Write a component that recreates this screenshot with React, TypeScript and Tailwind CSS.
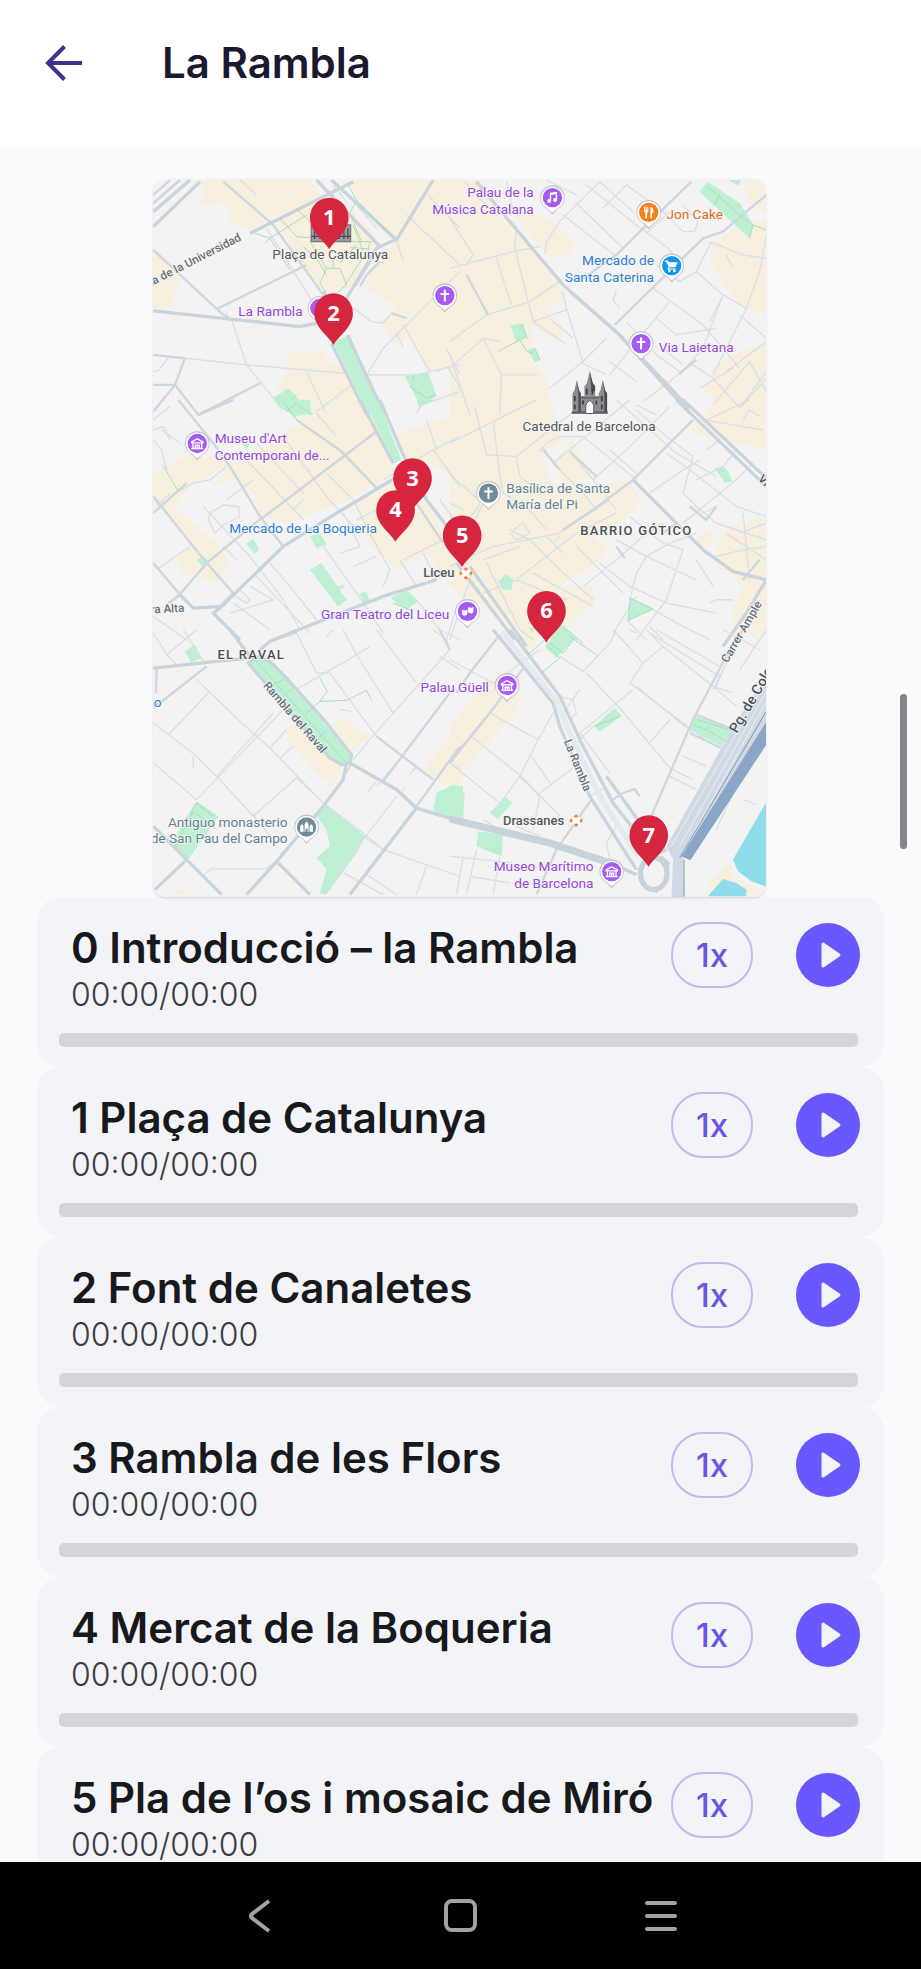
import type { ReactNode } from "react";

type Sheet = {
  x: number;
  y: number;
  built: string;
  parks: string;
  trails: string;
  minor: string;
  medium: string;
  major: string;
};

/* The map is drawn as six adjoining sheets, three units to the pixel. */
const sheets: Sheet[] = [
  {
    x: -9,
    y: -12,
    built:
      "M150 15L480 15L520 70L350 135L310 168L240 140L235 100L205 75L190 95L140 90L165 60ZM380 135L480 85L570 70L700 200L600 340L520 350L440 250ZM590 15L990 15L990 480L930 560L840 590L780 480L745 515L700 460L690 430L740 420L730 390L660 350L650 320L690 230L740 195L600 40ZM10 215L90 285L85 340L60 400L10 400ZM380 640L415 590L415 530L520 530L530 560L600 570L620 690L560 720L440 720Z",
    parks:
      "M550 500L600 480L700 720L655 720ZM370 670L415 640L490 720L440 720L390 700ZM765 605L835 592L860 665L812 692Z",
    trails:
      "M315 175L360 190L470 120M345 205L360 190M390 130L440 185L500 190M440 100L520 180M595 30L620 75L735 190M620 75L600 115L635 200M480 200L530 280L570 280L590 330L560 355M530 280L510 325L530 355M660 200L655 225L585 330M590 200L665 200M600 218L660 222M460 215L500 250L530 300M610 150L640 230M550 255L550 280M620 210L570 265M360 190L420 285M780 635L830 670L860 660M410 690L440 660M420 715L440 680L470 700M790 600L792 615",
    minor:
      "M105 550L290 570L640 600L800 600L930 570M245 435L290 570L375 675L440 720M570 385L610 400L665 440L700 445L725 415L770 430M650 600L700 520L770 450L930 290M760 450L840 590M740 195L760 260M770 120L930 270M835 60L930 160M350 160L500 400M470 590L525 710M500 710L600 635M890 520L930 600M740 475L760 515M30 580L55 550M10 590L30 585M230 410L235 430L350 440M270 15L320 60M550 30L590 80M620 90L680 160M860 590L895 575L930 640M800 715L815 690L930 650",
    medium:
      "M220 20L370 150L470 290L520 360M10 225L215 415L245 435M205 400L470 270M105 550L75 630L10 710M10 540L105 550M10 630L75 630L145 720L330 625M680 230L615 335M690 260L650 300L630 335M770 430L725 415M10 60L60 15M10 85L90 15",
    major:
      "M10 110L120 15M10 155L150 20M300 175L610 20M10 408L450 455L500 445M500 15L690 215M545 15L740 195M740 195L850 15M740 192L680 220L590 370M520 350L545 395M545 505L650 720M592 480L705 720",
  },
  {
    x: 891,
    y: -12,
    built:
      "M0 15L80 15L180 140L280 250L335 320L345 370L300 400L300 430L345 470L330 500L250 460L240 560L290 600L300 650L280 720L0 720ZM190 120L280 120L340 170L375 200L360 240L300 250ZM850 160L950 130L950 420L880 400L810 310L780 250L790 210ZM880 15L940 15L950 120L900 90ZM780 590L850 540L950 500L950 720L860 720L820 690L750 640L790 620Z",
    parks:
      "M750 50L775 20L870 85L912 150L900 190L830 125ZM835 15L875 15L865 32ZM180 452L220 445L232 490L200 500ZM235 525L255 518L272 555L255 563Z",
    trails:
      "M790 95L810 60M770 30L880 130L910 150L950 165M145 530L210 495L232 530L250 535M215 450L232 490M900 190L910 150M255 520L270 555",
    minor:
      "M0 130L70 240L50 270M0 280L190 230L270 215M45 20L110 90M200 150L195 220L250 440M285 240L290 200L330 140L450 20M0 500L110 420L240 380L330 320M140 250L185 390M340 350L350 400L400 565L470 600M250 440L345 505M250 440L350 405M375 80L520 220M340 120L500 245M410 30L560 150L650 215L700 270M460 100L530 30L640 110L700 170L735 170L745 140L700 90M785 200L740 290L820 360L780 440M780 200L880 240L950 250M950 180L930 290L890 400L790 600M610 340L760 450L870 580M620 430L680 480L800 460M660 380L560 500L480 600M530 440L620 540L690 590M690 600L760 520L820 360M870 420L950 490M820 360L890 400M0 580L100 490L150 500M100 490L155 600L150 720M0 540L60 720M155 600L260 600M470 490L400 560L300 640M580 680L660 620L730 560M830 590L950 500M870 700L950 590M500 345L490 375L510 400M450 20L550 110M590 175L660 110M620 270L690 320L740 290M830 240L850 280M730 570L790 610L870 700L950 610M640 520L700 570M750 640L850 580M790 690L900 560L950 650M290 15L380 60M170 20L190 110M560 690L620 720M300 430L370 490M480 560L560 620",
    medium:
      "M50 300L115 420M495 450L760 190L820 170L890 110L950 60M725 20L580 160L500 240L400 310M690 595L740 555",
    major: "M80 20L180 140L340 330L500 470L720 715M360 350L510 480L720 700",
  },
  {
    x: -9,
    y: 663,
    built:
      "M440 45L600 0L640 0L740 180L710 240L600 300L480 340L410 370L330 350L320 290L260 240L200 250L235 200L400 100L450 70ZM10 220L100 170L240 170L230 200L130 250L70 320L130 370L200 430L240 490L200 550L90 520L80 470L130 430L90 380L10 310ZM740 100L990 20L990 300L860 200L760 170ZM620 300L720 240L830 310L880 400L960 450L990 600L930 590L860 500L830 460L740 510L680 460L640 400Z",
    parks:
      "M640 0L685 0L755 180L735 190ZM370 0L480 0L485 40L430 50ZM288 430L310 418L328 450L312 462ZM140 480L160 470L178 485L160 505ZM480 510L515 490L590 600L565 620ZM628 580L650 575L660 605L640 608ZM722 595L770 570L805 605L770 630ZM480 410L510 400L530 435L500 445ZM800 0L860 0L808 22ZM275 130L300 130L290 150ZM560 560L585 555L575 570Z",
    trails:
      "M38 195L85 275M400 5L440 60M410 35L440 10L485 45M730 610L780 630",
    minor:
      "M85 275L130 250L180 240L230 200M10 120L35 150L50 210M35 90L90 130M10 90L40 80L60 120M320 130L460 280M280 170L460 360M400 110L530 290L620 390M500 40L560 110M530 220L610 300L660 400L720 510M180 340L220 315L265 320L270 350L220 375L195 400L175 360ZM20 510L120 440M175 490L60 610M160 320L300 470L400 600L450 690M360 490L420 560L500 660M240 580L290 610L300 600L270 570M310 520L480 700M520 440L620 580L700 700M610 500L680 470M580 340L630 440L570 460M700 240L850 150L930 110M850 150L930 260M830 60L860 150M720 510L700 560M760 480L820 450L880 420M750 480L800 560M820 460L860 540M800 600L870 690L930 720M890 720L920 620M240 640L370 600L300 560M250 610L360 690M10 650L110 720M460 300L430 330M230 300L310 240M220 440L260 480M60 280L20 320M10 60L60 20M870 300L930 380M620 360L720 310",
    medium:
      "M85 0L190 130L240 200L330 350L400 440M330 360L680 95M340 350L170 490L85 590L55 610M10 490L90 585M10 290L170 490L250 580L210 620M10 340L110 250M440 60L575 155L680 265M145 45L250 0M800 310L880 430",
    major:
      "M215 620L400 440L560 340L735 235M90 585L130 625L215 620L190 640L270 720M370 720L700 590L860 540M630 0L730 190M690 0L760 165L830 300L930 430",
  },
  {
    x: 891,
    y: 663,
    built:
      "M0 0L300 0L340 130L270 160L310 250L430 260L540 240L570 300L530 360L430 410L475 450L440 490L330 560L430 560L435 600L340 700L230 720L100 620L0 560ZM750 60L800 0L950 0L950 150L860 130L730 100L720 70ZM310 190L370 120L400 180L430 230L340 260ZM800 440L840 380L950 350L950 700L850 720L850 620L880 560L830 520L800 500ZM735 415L780 390L795 430L750 450Z",
    parks:
      "M145 545L170 522L190 540L185 572L160 570ZM542 595L610 628L535 662ZM795 205L820 200L835 215L848 245L825 248ZM330 670L385 720L300 720ZM235 685L255 680L250 700Z",
    trails: "M542 595L610 628L535 662ZM340 680L400 730",
    minor:
      "M0 225L100 310L40 430M0 130L140 60L260 0M75 20L110 165L200 170L300 90L380 30M130 60L150 230L160 280M200 170L210 230L260 270M270 155L290 130L330 110L400 110M360 155L430 240L500 330M280 140L310 190L400 280L440 330M310 190L420 100L540 0M400 110L560 240M430 240L530 150L660 20M480 150L560 220M500 0L680 160L800 230M560 30L650 110L730 170M600 280L700 210L750 180M650 160L720 210L860 320L950 350M740 240L820 200L860 150M730 170L700 280L760 340L800 320M740 320L800 370L950 420M700 370L860 240L910 190M0 500L130 440L330 400L480 300M110 490L210 690L250 720M180 390L240 420L320 500L430 600M190 390L220 370L240 400L200 420L180 400M290 410L340 460M310 430L330 410M100 580L200 540L380 400L500 340M200 540L350 600M250 520L430 620M450 490L540 560L650 610L800 640M500 420L590 470L740 540M590 470L560 520L540 600M540 350L640 430L700 450L650 600M590 470L660 430L740 400M650 600L560 720M610 630L700 680L780 720M780 610L800 600L850 600M800 470L880 450L950 440M830 400L950 480M880 340L900 540M870 400L950 370M740 480L790 560M640 370L590 400L500 480L400 560M0 420L80 330L120 250M160 280L230 320L290 390M760 60L820 70L940 90M880 60L900 30L930 50M770 60L900 0M810 120L770 150M0 350L60 430M100 480L210 440M560 590L490 700M380 440L520 580M0 720L60 540M40 330L0 310M530 660L590 720M600 680L640 720",
    medium:
      "M500 440L525 475M730 60L550 240L430 330L340 390M550 240L680 370M280 150L330 210M680 370L640 400M360 155L440 230M720 320L770 360L800 320M880 540L930 480",
    major:
      "M680 0L950 260M700 0L950 235M550 240L680 370L760 450L850 515L950 540M950 540L890 640L820 740M20 490L195 720M60 500L230 740",
  },
  {
    x: -9,
    y: 1353,
    built:
      "M410 290L450 285L580 410L550 465L500 430L415 330ZM550 280L590 268L660 325L600 370ZM820 420L930 280L930 480L870 460ZM60 795L80 782L120 785L130 795Z",
    parks:
      "M290 95L330 80L360 95L410 150L530 290L605 370L600 400L570 405L540 380L310 120ZM105 65L135 45L155 85L125 100ZM140 515L205 560L115 690L65 640L100 580ZM500 560L530 525L645 620L620 670L530 795L510 790L530 720L500 685L540 650L530 600ZM850 540L860 490L910 465L940 470L940 575L860 550Z",
    trails:
      "M310 85L590 400M370 165L400 150M410 190L430 175M465 255L510 215L590 212L650 182L665 212M510 145L532 185L510 215M505 330L530 300M120 550L140 520L190 560M75 650L130 545L200 600M590 430L605 400",
    minor:
      "M10 10L50 75L140 0M50 75L80 105M100 0L160 95M140 150L265 270L360 355L520 520L640 610L700 660L930 740M10 280L140 380L200 440L310 560L380 640M10 400L140 510M55 315L175 190M140 510L265 380L400 240M200 440L370 250M130 380L130 415M360 355L410 300M390 385L430 350M310 560L440 445L490 490M440 10L500 130L540 130L680 320M430 185L620 75L580 0M620 75L730 250L660 330L610 390M620 75L660 50M680 0L800 160M850 0L890 30L900 60L730 250M870 80L930 120M570 240L605 245M655 485L680 455M780 435L800 410M755 490L765 470M310 550L320 570M740 500L540 760M700 660L640 740L600 795M580 730L700 795M650 735L740 795M830 710L800 795M640 620L700 660M550 0L530 20M680 470L740 400M900 400L930 420M180 720L160 740M180 718L345 718L370 700",
    medium:
      "M10 235L170 110M20 115L18 190M700 455L900 190M680 320L850 450M800 530L930 350M900 60L870 0",
    major:
      "M240 0L300 80M10 115L200 95L300 85M330 60L360 35L440 5M295 100L320 130L540 385L575 405L600 400L605 375L530 280L410 145L360 95L325 80ZM590 400L580 450L520 530L380 695L290 795M600 400L740 480L800 535L930 575M800 535L600 795M10 590L110 690L215 795M110 690L15 780M380 695L480 795",
  },
  {
    x: 891,
    y: 1353,
    built:
      "M0 290L120 150L210 190L200 250L70 390L20 470L0 460ZM180 0L255 0L260 40L235 65ZM775 760L830 710L845 700L850 740L890 765L930 780L925 795L880 790L830 760L790 795Z",
    parks:
      "M0 465L45 490L40 565L0 560ZM120 550L165 500L188 520L145 568ZM80 650L85 605L160 615L155 680ZM433 290L495 235L515 258L450 307ZM720 300L735 258L850 300L815 350ZM285 50L330 0L375 25L320 85Z",
    trails:
      "M235 75L285 30M360 20L440 75M290 45L330 85L275 130M300 40L340 70L375 25M433 290L515 258M730 285L770 300L830 335M745 270L850 305M765 305L780 290",
    minor:
      "M0 90L130 160L270 60M120 250L265 330L310 250M65 320L220 445L330 560M0 400L150 520M265 330L210 440L130 550M245 380L300 460M270 490L370 415M270 500L250 600M210 440L270 500M330 80L400 125L480 40L500 0M410 130L510 235L660 415L730 450M390 180L340 250M550 180L390 310L480 430M490 0L580 100L540 160L780 340M580 100L640 50L590 0M600 10L810 140M640 50L790 170L850 190M620 0L810 110M820 0L930 60M660 270L600 340M700 380L770 410M660 440L740 480M800 170L850 50M730 310L560 170M860 230L780 160M330 200L370 210L380 250L360 270M450 480L500 590L470 640L480 690M420 500L470 470M80 660L60 750L50 795M150 680L130 795M0 680L190 700M60 740L180 760M200 590L270 620M40 680L20 795M880 510L920 525M850 490L800 600M100 570L150 600M540 590L580 560M370 350L430 290M790 180L880 0M950 0L870 120M540 0L560 10",
    medium:
      "M225 110L120 250L0 400M150 15L60 130L20 190M600 570L730 270L840 60L880 0M425 510L320 660L260 795M490 510L520 490L555 478L570 500M740 255L850 300M720 310L815 355M0 395L120 250",
    major:
      "M130 0L310 220L330 290L420 500L560 720M180 0L330 200L400 350L490 520L545 590M470 440L600 620M590 690L570 720L590 770L620 785L650 750L655 700L630 680M0 568L300 640L480 700L560 735M650 660L600 680",
  },
];

const purple = "fill-[#9548dc]";
const slate = "fill-[#66818f]";
const blue = "fill-[#2f7fcf]";
const ink = "fill-[#54585b]";

type Label = { x: number; y: number; tone: string; end?: boolean; mid?: boolean; turn?: number; heavy?: boolean; lines: string[] };

const labels: Label[] = [
  { x: 541, y: 240, tone: ink, mid: true, lines: ["Plaça de Catalunya"] },
  { x: 458, y: 411, tone: purple, end: true, lines: ["La Rambla"] },
  { x: 1152, y: 54, tone: purple, end: true, lines: ["Palau de la", "Música Catalana"] },
  { x: 1550, y: 121, tone: "fill-[#dd6c26]", lines: ["Jon Cake"] },
  { x: 1513, y: 258, tone: blue, end: true, lines: ["Mercado de", "Santa Caterina"] },
  { x: 1527, y: 518, tone: purple, lines: ["Via Laietana"] },
  { x: 194, y: 793, tone: purple, lines: ["Museu d'Art", "Contemporani de..."] },
  { x: 681, y: 1062, tone: blue, end: true, lines: ["Mercado de La Boqueria"] },
  { x: 1318, y: 755, tone: ink, mid: true, lines: ["Catedral de Barcelona"] },
  { x: 1069, y: 942, tone: slate, lines: ["Basílica de Santa", "María del Pi"] },
  { x: 898, y: 1322, tone: purple, end: true, lines: ["Gran Teatro del Liceu"] },
  { x: 1017, y: 1540, tone: purple, end: true, lines: ["Palau Güell"] },
  { x: 413, y: 1944, tone: slate, end: true, lines: ["Antiguo monasterio", "de San Pau del Campo"] },
  { x: 1331, y: 2077, tone: purple, end: true, lines: ["Museo Marítimo", "de Barcelona"] },
  { x: 914, y: 1197, tone: ink, end: true, heavy: true, lines: ["Liceu"] },
  { x: 1243, y: 1943, tone: ink, end: true, heavy: true, lines: ["Drassanes"] },
  { x: 35, y: 1584, tone: blue, end: true, lines: ["Sant Antonio"] },
];

const streets: Label[] = [
  { x: 272, y: 187, tone: "fill-[#66717b]", end: true, turn: -27, lines: ["Ronda de la Universidad"] },
  { x: 103, y: 1302, tone: "fill-[#66717b]", end: true, turn: -3, lines: ["Riera Alta"] },
  { x: 345, y: 1528, tone: "fill-[#66717b]", turn: 49, lines: ["Rambla del Raval"] },
  { x: 1250, y: 1696, tone: "fill-[#66717b]", turn: 68, lines: ["La Rambla"] },
  { x: 1726, y: 1462, tone: "fill-[#66717b]", turn: -60, lines: ["Carrer Ample"] },
  { x: 1830, y: 908, tone: "fill-[#4b535b]", turn: 45, lines: ["Via Laietana"] },
];

function CrossGlyph() {
  return <path d="M-3-18h6v10h10v6H3v20h-6V-2h-10v-6h10z" className="fill-white" />;
}

function MuseumGlyph() {
  return (
    <g className="fill-none stroke-white stroke-[4]">
      <path d="M-17-5L0-14 17-5V-2H-17ZM-13-2V14M13-2V14M-18 15H18M-6 14V5H6V14M0 5V14" />
    </g>
  );
}

function MusicGlyph() {
  return (
    <g className="fill-white">
      <path d="M-8-15L14-18V-11L-4-8V9H-8ZM10-14H14V6H10Z" />
      <circle cx="-10" cy="10" r="6" />
      <circle cx="8" cy="7" r="6" />
    </g>
  );
}

function ForkGlyph() {
  return (
    <path
      d="M-14-17h3v9h2v-9h3v9h2v-9h3v12q0 5-4 6V18h-5V1q-4-1-4-6zM5-17q9 1 9 12V2h-4v16H5z"
      className="fill-white"
    />
  );
}

function CartGlyph() {
  return (
    <g className="fill-white">
      <path d="M-19-15h8l3 5h26L11 5h-17l-2 4h20v3h-25l4-9-7-14h-5z" />
      <circle cx="-7" cy="16" r="4" />
      <circle cx="8" cy="16" r="4" />
    </g>
  );
}

function MaskGlyph() {
  return (
    <g className="fill-white">
      <path d="M-17-5q8 5 17 0v12q-2 6-8 6-7 0-9-6z" />
      <path d="M2-13q8 4 16 0V0q-2 6-8 6-6 0-8-4z" />
    </g>
  );
}

function AbbeyGlyph() {
  return (
    <path d="M-19 14V-3l5-5 5 5V14ZM-6 14V-9L0-17 6-9V14H3V6Q0 2-3 6V14ZM9 14V-3l5-5 5 5V14Z" className="fill-white" />
  );
}

const violet = "fill-[#a75bf2]";
const places: { x: number; y: number; tone: string; glyph: ReactNode }[] = [
  { x: 885, y: 362, tone: violet, glyph: <CrossGlyph /> },
  { x: 510, y: 400, tone: violet, glyph: null },
  { x: 1208, y: 68, tone: violet, glyph: <MusicGlyph /> },
  { x: 1497, y: 112, tone: "fill-[#f7811e]", glyph: <ForkGlyph /> },
  { x: 1566, y: 272, tone: "fill-[#1296f0]", glyph: <CartGlyph /> },
  { x: 1474, y: 506, tone: violet, glyph: <CrossGlyph /> },
  { x: 142, y: 806, tone: violet, glyph: <MuseumGlyph /> },
  { x: 1016, y: 955, tone: "fill-[#708b99]", glyph: <CrossGlyph /> },
  { x: 953, y: 1310, tone: violet, glyph: <MaskGlyph /> },
  { x: 1072, y: 1532, tone: violet, glyph: <MuseumGlyph /> },
  { x: 470, y: 1957, tone: "fill-[#708b99]", glyph: <AbbeyGlyph /> },
  { x: 1386, y: 2091, tone: violet, glyph: <MuseumGlyph /> },
];

const stops = [
  { n: 1, x: 538, y: 128 },
  { n: 2, x: 551, y: 415 },
  { n: 3, x: 788, y: 910 },
  { n: 4, x: 737, y: 1006 },
  { n: 5, x: 937, y: 1082 },
  { n: 6, x: 1190, y: 1309 },
  { n: 7, x: 1497, y: 1982 },
];

function MapLabel({ label, street }: { label: Label; street?: boolean }) {
  const anchor = label.end ? "[text-anchor:end]" : label.mid ? "[text-anchor:middle]" : "";
  return (
    <text
      transform={`translate(${label.x} ${label.y})${label.turn ? ` rotate(${label.turn})` : ""}`}
      className={`stroke-[#f7f7f7] stroke-[5] [paint-order:stroke] ${label.tone} ${anchor} ${
        street ? "text-[35px] font-medium" : label.heavy ? "text-[39px] font-medium" : "text-[41px]"
      }`}
      dominantBaseline="middle"
    >
      {label.lines.map((line, i) => (
        <tspan key={line} x={0} dy={i ? 50 : 0}>
          {line}
        </tspan>
      ))}
    </text>
  );
}

function Station({ x, y }: { x: number; y: number }) {
  return (
    <g transform={`translate(${x} ${y})`}>
      <path d="M0-20L20 0 0 20-20 0Z" className="fill-white" />
      <path
        d="M-7-13L0-19 7-13 0-7ZM-7 13L0 7 7 13 0 19ZM-17-7L-10-1-14 7-20 1ZM17-7L10-1 14 7 20 1Z"
        className="fill-[#ee8133]"
      />
    </g>
  );
}

function Cathedral() {
  return (
    <g transform="translate(1320 655)">
      <path
        d="M-52 60V0L-46-8-39-40-32-8-27 0V8H-16V-22L-9-30 0-66 9-30 16-22V8H27V0L32-8 39-40 46-8 52 0V60Z"
        className="fill-[#8b8d91]"
      />
      <path
        d="M-34 60V0L-39-40-32-8-27 0V60ZM0-66L9-30 16-22V-6H4V-20ZM39-40L46-8 52 0V60H44V0Z"
        className="fill-[#4a4c50]"
      />
      <path
        d="M-45 8V24M-45 34V48M36 8V24M36 34V48M-9-14V4M8-14V4M-20 22V34M20 22V34"
        className="stroke-[#3a3c40] stroke-[5]"
      />
      <path d="M-54 55H54V62H-54ZM-28 12H28V16H-28Z" className="fill-[#5c5e62]" />
      <path d="M-12 61V38Q-11 27 0 22 11 27 12 38V61Z" className="fill-white stroke-[#55575b] stroke-[3]" />
    </g>
  );
}

function RouteMap() {
  return (
    <svg
      viewBox="0 0 1839 2154"
      role="img"
      aria-label="La Rambla"
      className="block w-2/3 overflow-hidden rounded-[12px] bg-[#f3f3f4] font-[Roboto,sans-serif] shadow-sm"
    >
      {sheets.map((s) => (
        <g key={`${s.x},${s.y}`} transform={`translate(${s.x} ${s.y})`}>
          <path d={s.built} className="fill-[#f8f0df]" />
        </g>
      ))}
      {sheets.map((s) => (
        <g key={`${s.x},${s.y}`} transform={`translate(${s.x} ${s.y})`} className="fill-none">
          <path d={s.parks} className="fill-[#bdf0d3]" />
          <path d={s.minor} className="stroke-[#d8dfe5] stroke-[4]" />
          <path d={s.medium} className="stroke-[#ced7df] stroke-[7]" />
          <path d={s.major} className="stroke-[#cad4dc] stroke-[10]" />
          <path d={s.trails} className="stroke-[#a8dcbb] stroke-[3]" />
        </g>
      ))}
      <g transform="translate(891 1353)" className="fill-none">
        <path d="M960 500L850 690 865 725 905 755 960 775ZM775 800L820 748 860 760 890 780 890 800Z" className="fill-[#8edcec]" />
        <path d="M860 275L960 125V260L720 640 700 690 705 810H665L670 690 650 650Z" className="fill-[#d0d9e3]" />
        <path d="M960 260V330L722 692 695 680Z" className="fill-[#8aa5c6]" />
        <path d="M950 155L665 650M950 185L690 650M950 215L700 670" className="stroke-[#e9eff4] stroke-[3]" />
        <path d="M950 245L690 685M703 690V800" className="stroke-[#8795a5] stroke-[3]" />
        <path d="M0 568L300 640 480 700" className="stroke-[#c7d2db] stroke-[22]" />
        <path d="M155 5L320 215 365 320 450 500 565 680" className="stroke-[#e4eaef] stroke-[16]" />
        <ellipse cx="612" cy="732" rx="40" ry="48" className="fill-[#f3f3f4] stroke-[#c7d2db] stroke-[16]" />
      </g>
      <g transform="translate(-9 -12)">
        <g className="stroke-[#77797d] stroke-[4]">
          <path d="M484 150H602V200H484Z" className="fill-[#9b9da0]" />
          <path d="M494 160V192M510 160V192M568 160V192M582 160V192M594 160V192M484 184H602" className="stroke-[#4a4c50]" />
        </g>
        <Cathedral />
        {streets.map((s) => (
          <MapLabel key={s.lines[0] + s.x} label={s} street />
        ))}
        <text
          transform="translate(1762 1678) rotate(-60)"
          className="fill-[#4b535b] stroke-[#f7f7f7] stroke-[5] text-[43px] font-medium [paint-order:stroke]"
        >
          Pg. de Colom
        </text>
        {labels.map((l) => (
          <MapLabel key={l.lines[0]} label={l} />
        ))}
        <g className="fill-[#4b4f52] stroke-[#f7f7f7] stroke-[5] text-[39px] font-medium tracking-widest [paint-order:stroke] [text-anchor:middle]">
          <text x="1460" y="1080">BARRIO GÓTICO</text>
          <text x="304" y="1453">EL RAVAL</text>
        </g>
        <Station x={948} y={1196} />
        <Station x={1279} y={1938} />
        {places.map((p) => (
          <g key={`${p.x},${p.y}`} transform={`translate(${p.x} ${p.y})`}>
            <path d="M0 51Q-10 37-24 28A37 37 0 1 1 24 28Q10 37 0 51Z" className="fill-[#c3c6cc]" />
            <path d="M0 45Q-10 34-22 27A34 34 0 1 1 22 27Q10 34 0 45Z" className="fill-white" />
            <circle r="29" className={p.tone} />
            {p.glyph}
          </g>
        ))}
        {stops.map((s) => (
          <g key={s.n} transform={`translate(${s.x} ${s.y})`}>
            <path d="M0 95C-14 68-58 44-58 0A58 60 0 1 1 58 0C58 44 14 68 0 95Z" className="fill-[#d6263f]" />
            <text y="22" className="fill-white font-['Open_Sans',sans-serif] text-[66px] font-bold [text-anchor:middle]">
              {s.n}
            </text>
          </g>
        ))}
      </g>
    </svg>
  );
}

function Track({ title }: { title: string }) {
  return (
    <li className="rounded-[24px] bg-[#f3f4f8] pt-6 pr-6 pb-5 pl-[22px]">
      <div className="flex h-[112px] items-start">
        <div className="min-w-0 flex-1 pl-3">
          <h2 className="text-[42px] leading-[54px] font-semibold whitespace-nowrap text-[#18191c]">{title}</h2>
          <p className="text-[32px] leading-[40px] font-light text-[#3c3d41]">00:00/00:00</p>
        </div>
        <button
          type="button"
          aria-label={`Playback speed, ${title}`}
          className="mt-px mr-[43px] h-[66px] w-[82px] shrink-0 rounded-[32px] border-2 border-[#c3b9ea] pt-0.5 text-[33px] leading-none font-medium text-[#6a56e3]"
        >
          1x
        </button>
        <button
          type="button"
          aria-label={`Play ${title}`}
          className="mt-0.5 flex size-16 shrink-0 items-center justify-center rounded-full bg-[#6958fe]"
        >
          <svg viewBox="0 0 64 64" className="size-16" aria-hidden="true">
            <path d="M27 21L43 32L27 43Z" className="fill-[#f3f4f8] stroke-[#f3f4f8] stroke-[3] [stroke-linejoin:round]" />
          </svg>
        </button>
      </div>
      <div className="mr-0.5 h-[14px] rounded-[5px] bg-[#d4d5d9]" />
    </li>
  );
}

const tracks = [
  "0 Introducció – la Rambla",
  "1 Plaça de Catalunya",
  "2 Font de Canaletes",
  "3 Rambla de les Flors",
  "4 Mercat de la Boqueria",
  "5 Pla de l’os i mosaic de Miró",
];

export default function App() {
  return (
    <div className="flex h-screen flex-col bg-[#fafafd] font-[Inter,sans-serif]">
      <header className="flex h-[145px] shrink-0 items-start bg-white pt-[35px] pl-9">
        <button type="button" aria-label="Back" className="flex size-14 items-center justify-center">
          <svg viewBox="0 0 56 56" className="size-14 fill-none stroke-[#3f328c] stroke-[4]" aria-hidden="true">
            <path d="M28.5 11.5L12 28L28.5 44.5M12 28H46" />
          </svg>
        </button>
        <h1 className="ml-[70px] text-[42px] leading-14 font-semibold text-[#1b1830]">La Rambla</h1>
      </header>
      <main className="relative min-h-0 flex-1">
        <div className="h-full overflow-y-auto [scrollbar-width:none]">
          <div className="flex justify-center pt-[34px] pr-0.5">
            <RouteMap />
          </div>
          <ul className="mx-[37px]">
            {tracks.map((t) => (
              <Track key={t} title={t} />
            ))}
          </ul>
        </div>
        <div className="absolute top-[549px] right-[14px] h-[155px] w-[7px] rounded-full bg-[#85868a]" />
      </main>
      <nav className="flex h-[107px] shrink-0 items-center justify-center gap-[144px] bg-black">
        <button type="button" aria-label="Back" className="size-14">
          <svg viewBox="0 0 56 56" className="size-14 fill-none stroke-[#a3a3a3] stroke-[4]" aria-hidden="true">
            <path d="M36 13L19 26Q17 28 19 30L36 43" />
          </svg>
        </button>
        <button type="button" aria-label="Home" className="size-14">
          <svg viewBox="0 0 56 56" className="size-14 fill-none stroke-[#a3a3a3] stroke-[4]" aria-hidden="true">
            <rect x="13" y="13" width="29" height="29" rx="6" />
          </svg>
        </button>
        <button type="button" aria-label="Recent apps" className="size-14">
          <svg viewBox="0 0 56 56" className="size-14 fill-none stroke-[#a3a3a3] stroke-[4] [stroke-linecap:round]" aria-hidden="true">
            <path d="M14 15H42M14 28H42M14 41H42" />
          </svg>
        </button>
      </nav>
    </div>
  );
}
